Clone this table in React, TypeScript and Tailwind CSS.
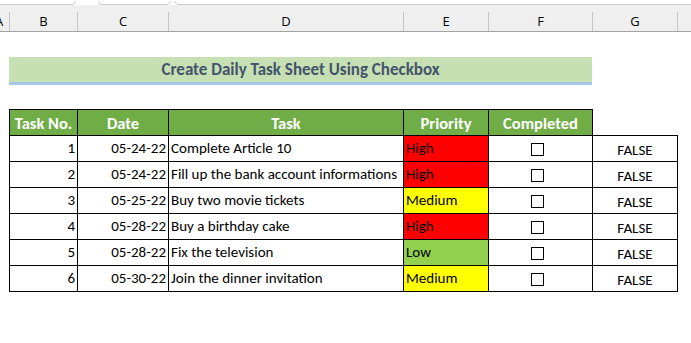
import React from "react"

type Row = { no: number; date: string; task: string; priority: "High" | "Medium" | "Low" }

const rows: Row[] = [
  { no: 1, date: "05-24-22", task: "Complete Article 10", priority: "High" },
  { no: 2, date: "05-24-22", task: "Fill up the bank account informations", priority: "High" },
  { no: 3, date: "05-25-22", task: "Buy two movie tickets", priority: "Medium" },
  { no: 4, date: "05-28-22", task: "Buy a birthday cake", priority: "High" },
  { no: 5, date: "05-28-22", task: "Fix the television", priority: "Low" },
  { no: 6, date: "05-30-22", task: "Join the dinner invitation", priority: "Medium" },
]

const priorityBg: Record<Row["priority"], string> = {
  High: "bg-[#ff0000]",
  Medium: "bg-[#ffff00]",
  Low: "bg-[#92d050]",
}

// sheet column letters with widths (incl. the right separator)
const sheetCols = [
  { label: "A", w: "w-[10px]" },
  { label: "B", w: "w-[68px]" },
  { label: "C", w: "w-[91px]" },
  { label: "D", w: "w-[235px]" },
  { label: "E", w: "w-[85px]" },
  { label: "F", w: "w-[104px]" },
  { label: "G", w: "w-[85px]" },
]

function TopStrip() {
  return (
    <svg width="691" height="5" className="block">
      <path
        d="M0 4.5 H72 Q75 4.5 75.5 1 M99 1 Q99.5 4.5 102 4.5 H167 Q170 4.5 170.5 1 M175 1 Q175.5 4.5 178 4.5 H691"
        fill="none"
        stroke="#cdcdcd"
        strokeWidth="1"
      />
    </svg>
  )
}

function ColumnHeader() {
  return (
    <div className="flex h-[27px] bg-[#efefef] border-b border-[#a3a3a3] font-[family-name:'Open_Sans',sans-serif] text-[13px] text-black">
      {sheetCols.map((c) => (
        <div key={c.label} className={`${c.w} flex shrink-0 overflow-hidden`}>
          <div className={`flex-1 flex items-center ${c.label === "A" ? "justify-start -ml-[5px]" : "justify-center"} pt-[8px]`}>
            {c.label}
          </div>
          <span className="w-px h-[19px] self-end bg-[#c4c4c4]" />
        </div>
      ))}
      <div className="flex-1" />
    </div>
  )
}

export default function App() {
  return (
    <div className="w-[691px] h-[343px] bg-white overflow-hidden font-[family-name:Carlito,Lato,sans-serif]">
      <TopStrip />
      <ColumnHeader />

      {/* title */}
      <div className="mt-[25px] ml-[9px] w-[583px]">
        <div className="h-[25px] bg-[#c6e0b4] flex items-center justify-center text-[#44546a] font-bold text-[17px] pt-[1px]">
          Create Daily Task Sheet Using Checkbox
        </div>
        <div className="h-[3px] bg-[#a6c8e8]" />
      </div>

      {/* table */}
      <div className="mt-[24px] ml-[9px] text-[15px] text-black">
        <div className="flex h-[27px] text-white font-bold text-[16.5px]">
          <div className="w-[69px] bg-[#70ad47] border border-black flex items-center justify-center pt-[1px]">Task No.</div>
          <div className="w-[91px] bg-[#70ad47] border-y border-r border-black flex items-center justify-center pt-[1px]">Date</div>
          <div className="w-[235px] bg-[#70ad47] border-y border-r border-black flex items-center justify-center pt-[1px]">Task</div>
          <div className="w-[85px] bg-[#70ad47] border-y border-r border-black flex items-center justify-center pt-[1px]">Priority</div>
          <div className="w-[104px] bg-[#70ad47] border-y border-r border-black flex items-center justify-center pt-[1px]">Completed</div>
          <div className="w-[85px] border-b border-black" />
        </div>
        {rows.map((r) => (
          <div key={r.no} className="flex h-[26px]">
            <div className="w-[69px] border-x border-b border-black flex items-end justify-end pr-[2px] pb-[2px]">{r.no}</div>
            <div className="w-[91px] border-r border-b border-black flex items-end justify-end pr-[2px] pb-[2px]">{r.date}</div>
            <div className="w-[235px] border-r border-b border-black flex items-end pl-[2px] pb-[2px] whitespace-nowrap overflow-hidden">{r.task}</div>
            <div className={`w-[85px] border-r border-b border-black flex items-end pl-[2px] pb-[2px] ${priorityBg[r.priority]}`}>{r.priority}</div>
            <div className="w-[104px] border-r border-b border-black flex items-center justify-center pr-[6px] pt-[1px]">
              <span className="w-[13px] h-[13px] border border-black bg-white" />
            </div>
            <div className="w-[85px] border-r border-b border-black flex items-end justify-center">FALSE</div>
          </div>
        ))}
      </div>
    </div>
  )
}
